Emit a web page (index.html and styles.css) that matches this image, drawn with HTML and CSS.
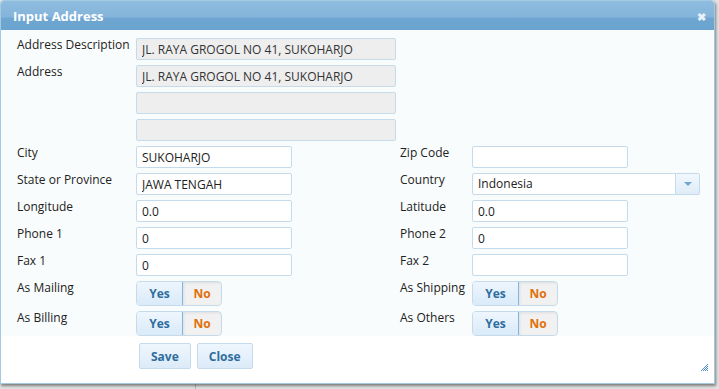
FILE: index.html
```html
<!DOCTYPE html>
<html lang="en">
<head>
  <meta charset="UTF-8">
  <meta name="viewport" content="width=device-width, initial-scale=1.0">
  <title>Input Address</title>
  <link rel="stylesheet" href="styles.css">
</head>
<body>
  <div class="page">
    <div class="dialog">
      <div class="titlebar">
        <span class="title">Input Address</span>
        <span class="close">&#10006;</span>
      </div>

      <div class="form">
        <label class="lbl">Address Description</label>
        <input class="field wide readonly" type="text" value="JL. RAYA GROGOL NO 41, SUKOHARJO" readonly>

        <label class="lbl">Address</label>
        <input class="field wide readonly" type="text" value="JL. RAYA GROGOL NO 41, SUKOHARJO" readonly>
        <span></span>
        <input class="field wide readonly" type="text" value="" readonly>
        <span></span>
        <input class="field wide readonly" type="text" value="" readonly>

        <label class="lbl">City</label>
        <input class="field" type="text" value="SUKOHARJO">
        <label class="lbl right">Zip Code</label>
        <input class="field" type="text" value="">

        <label class="lbl">State or Province</label>
        <input class="field" type="text" value="JAWA TENGAH">
        <label class="lbl right">Country</label>
        <div class="combo">
          <span class="combo-text">Indonesia</span>
          <span class="combo-btn"><span class="caret"></span></span>
        </div>

        <label class="lbl">Longitude</label>
        <input class="field" type="text" value="0.0">
        <label class="lbl right">Latitude</label>
        <input class="field" type="text" value="0.0">

        <label class="lbl">Phone 1</label>
        <input class="field" type="text" value="0">
        <label class="lbl right">Phone 2</label>
        <input class="field" type="text" value="0">

        <label class="lbl">Fax 1</label>
        <input class="field" type="text" value="0">
        <label class="lbl right">Fax 2</label>
        <input class="field" type="text" value="">

        <label class="lbl">As Mailing</label>
        <div class="toggle"><span class="yes">Yes</span><span class="no">No</span></div>
        <label class="lbl right">As Shipping</label>
        <div class="toggle"><span class="yes">Yes</span><span class="no">No</span></div>

        <label class="lbl">As Billing</label>
        <div class="toggle"><span class="yes">Yes</span><span class="no">No</span></div>
        <label class="lbl right">As Others</label>
        <div class="toggle"><span class="yes">Yes</span><span class="no">No</span></div>
      </div>

      <div class="buttonpane">
        <button class="btn" type="button">Save</button>
        <button class="btn" type="button">Close</button>
        <svg class="grip" width="9" height="9" viewBox="0 0 9 9">
          <g fill="#4a8fd6">
            <rect x="7" y="1" width="1" height="1"/>
            <rect x="5" y="3" width="1" height="1"/><rect x="7" y="3" width="1" height="1"/>
            <rect x="6" y="2" width="1" height="1"/>
            <rect x="3" y="5" width="1" height="1"/><rect x="5" y="5" width="1" height="1"/><rect x="7" y="5" width="1" height="1"/>
            <rect x="4" y="4" width="1" height="1"/><rect x="6" y="4" width="1" height="1"/>
            <rect x="1" y="7" width="1" height="1"/><rect x="3" y="7" width="1" height="1"/><rect x="5" y="7" width="1" height="1"/><rect x="7" y="7" width="1" height="1"/>
            <rect x="2" y="6" width="1" height="1"/><rect x="4" y="6" width="1" height="1"/><rect x="6" y="6" width="1" height="1"/>
          </g>
        </svg>
      </div>
    </div>

    <div class="behind"></div>
  </div>
</body>
</html>
```

FILE: styles.css
```css
* {
  margin: 0;
  padding: 0;
  box-sizing: border-box;
}

body {
  font-family: "Open Sans", "Noto Sans", sans-serif;
  font-size: 12px;
  color: #222;
  background: #e3e3e3;
  overflow: hidden;
}

.page {
  width: 719px;
  height: 389px;
}

.dialog {
  position: relative;
  z-index: 2;
  width: 715px;
  height: 384px;
  background: #fff;
  border: 1px solid #a6c9e2;
  border-radius: 4px 4px 0 0;
  box-shadow: 1px 2px 3px rgba(0, 0, 0, 0.45);
}

.titlebar {
  height: 29px;
  display: flex;
  align-items: center;
  justify-content: space-between;
  padding: 0 8px 0 12px;
  background: linear-gradient(to bottom, #8fbde0 0%, #84b4da 55%, #6ea6d1 60%, #6aa3cf 100%);
  border-radius: 3px 3px 0 0;
}

.title {
  color: #fff;
  font-weight: bold;
  font-size: 13px;
  margin-top: 1px;
}

.close {
  color: #e8f1f9;
  font-size: 11px;
  font-weight: bold;
  margin-top: 1px;
}

.form {
  display: grid;
  grid-template-columns: 119px 156px 108px 72px auto;
  grid-template-rows: repeat(9, 22px) 25px 25px;
  row-gap: 5px;
  padding: 8px 0 0 16px;
  background: #f9fcfc;
}

.form > span:empty {
  display: block;
}

.lbl {
  grid-column: 1;
  line-height: 14px;
  color: #222;
  white-space: nowrap;
}

.lbl.right {
  grid-column: 4;
}

.field {
  height: 22px;
  width: 156px;
  border: 1px solid #c5dbec;
  border-radius: 2px;
  background: #fff;
  padding: 0 5px;
  font-family: inherit;
  font-size: 12px;
  color: #222;
  outline: none;
}

.field.wide {
  grid-column: 2 / span 2;
  width: 260px;
}

.field.readonly {
  background: #eeeeee;
  color: #333;
}

.combo {
  width: 228px;
  height: 22px;
  display: flex;
  border: 1px solid #c5dbec;
  border-radius: 2px;
  background: #fff;
}

.combo-text {
  flex: 1;
  padding: 0 5px;
  line-height: 20px;
}

.combo-btn {
  width: 24px;
  border-left: 1px solid #c5dbec;
  background: linear-gradient(to bottom, #f1f7fd, #dfecf8);
  display: flex;
  align-items: center;
  justify-content: center;
}

.caret {
  width: 0;
  height: 0;
  border-left: 4px solid transparent;
  border-right: 4px solid transparent;
  border-top: 4px solid #6ea6d1;
}

.toggle {
  width: 86px;
  height: 25px;
  display: flex;
  border: 1px solid #c5dbec;
  border-radius: 4px;
  overflow: hidden;
  font-weight: bold;
}

.yes {
  width: 45px;
  display: flex;
  align-items: center;
  justify-content: center;
  color: #2e6e9e;
  background: linear-gradient(to bottom, #eef6fd 0%, #e4f0fb 50%, #d9eaf9 100%);
}

.no {
  flex: 1;
  display: flex;
  align-items: center;
  justify-content: center;
  color: #e17009;
  background: #f1f1f1;
  border: 1px solid #79b7e7;
  border-radius: 0 3px 3px 0;
  margin: -1px -1px -1px 0;
  box-shadow: inset 1px 1px 3px rgba(0, 0, 0, 0.08);
}

.buttonpane {
  position: relative;
  height: 46px;
  display: flex;
  gap: 6px;
  align-items: flex-start;
  padding: 7px 0 0 138px;
  background: #fff;
}

.btn {
  height: 26px;
  padding: 0 11px;
  font-family: inherit;
  font-size: 12px;
  font-weight: bold;
  color: #2e6e9e;
  background: linear-gradient(to bottom, #eef6fd, #dcebf9);
  border: 1px solid #c5dbec;
  border-radius: 2px;
}

.grip {
  position: absolute;
  right: 5px;
  bottom: 10px;
}

.behind {
  position: relative;
  z-index: 1;
  height: 5px;
  margin-left: 195px;
  border-left: 1px solid #b8b8b8;
}
```
